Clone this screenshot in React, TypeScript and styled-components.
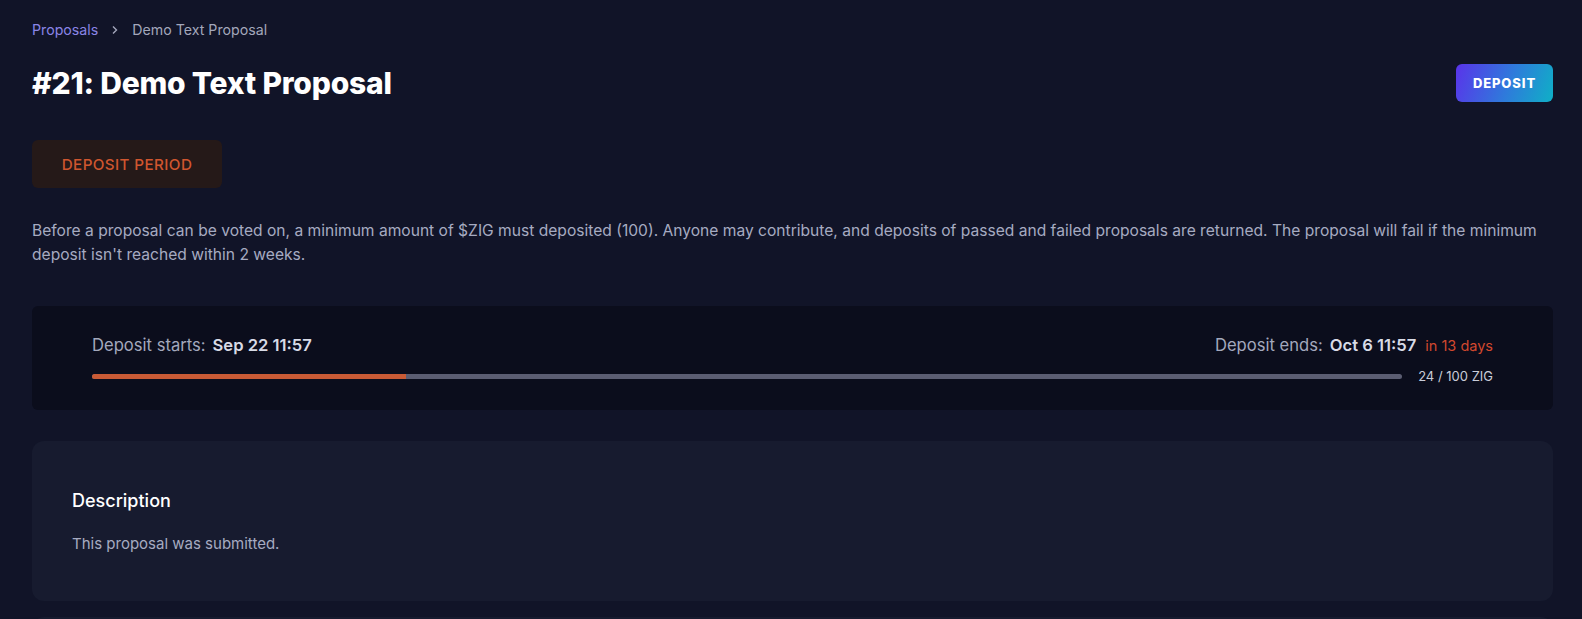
import React from "react";
import styled, { createGlobalStyle } from "styled-components";

const GlobalStyle = createGlobalStyle`
  html, body {
    margin: 0;
    padding: 0;
    background: #111428;
  }
  body {
    font-family: Inter, "Noto Sans", "Liberation Sans", sans-serif;
    -webkit-font-smoothing: antialiased;
  }
  * { box-sizing: border-box; }
`;

const Page = styled.main`
  min-height: 619px;
  background: #111428;
  padding: 20px 29px 0 32px;
  display: flex;
  flex-direction: column;
`;

const Breadcrumbs = styled.nav`
  display: flex;
  align-items: center;
  gap: 13px;
  font-size: 14.2px;
  line-height: 20px;
  height: 20px;
`;

const CrumbLink = styled.a`
  color: #8a85e6;
  text-decoration: none;
`;

const CrumbSep = styled.span`
  color: #a3a7bb;
  display: inline-flex;
  align-items: center;
`;

const CrumbCurrent = styled.span`
  color: #a3a7bb;
`;

const HeaderRow = styled.div`
  display: flex;
  align-items: center;
  justify-content: space-between;
  margin-top: 24px;
  height: 38px;
`;

const Title = styled.h1`
  margin: 0;
  color: #ffffff;
  font-size: 30px;
  font-weight: 800;
  letter-spacing: -0.2px;
`;

const GradientButton = styled.button`
  height: 38px;
  width: 97px;
  border: 0;
  border-radius: 6px;
  background: linear-gradient(110deg, #5a33ea 0%, #2e7bdb 55%, #0fb0c6 100%);
  color: #ffffff;
  font-family: inherit;
  font-size: 13px;
  font-weight: 800;
  letter-spacing: 0.9px;
  cursor: pointer;
`;

const StatusBadge = styled.div`
  margin-top: 38px;
  width: 190px;
  height: 48px;
  border-radius: 6px;
  background: #251918;
  color: #d0562f;
  font-size: 15.2px;
  font-weight: 500;
  letter-spacing: 0.4px;
  display: flex;
  align-items: center;
  justify-content: center;
`;

const Intro = styled.p`
  margin: 31px 0 0;
  color: #a6abc1;
  font-size: 15.6px;
  line-height: 24px;
`;

const TimelineCard = styled.section`
  margin-top: 39px;
  background: #0b0d1c;
  border-radius: 6px;
  padding: 29px 60px 26px;
  display: flex;
  flex-direction: column;
  gap: 13px;
`;

const TimelineLabels = styled.div`
  display: flex;
  justify-content: space-between;
  align-items: baseline;
`;

const DateGroup = styled.div`
  display: flex;
  align-items: baseline;
  gap: 7px;
  font-size: 16.6px;
`;

const DateLabel = styled.span`
  color: #a3a8bd;
`;

const DateValue = styled.span`
  color: #d8dbe6;
  font-weight: 600;
`;

const Remaining = styled.span`
  color: #d2482e;
  font-size: 14.5px;
  margin-left: 2px;
`;

const ProgressRow = styled.div`
  display: flex;
  align-items: center;
  gap: 16px;
`;

const Track = styled.div`
  flex: 1;
  height: 5px;
  border-radius: 3px;
  background: #5b5d72;
  overflow: hidden;
`;

const Fill = styled.div`
  height: 100%;
  background: #c95a35;
`;

const Amount = styled.span`
  color: #c9ccd8;
  font-size: 13px;
`;

const DescriptionCard = styled.section`
  margin-top: 31px;
  background: #171b2f;
  border-radius: 12px;
  padding: 49px 40px 46px;
  display: flex;
  flex-direction: column;
  gap: 22px;
`;

const CardTitle = styled.h2`
  margin: 0;
  color: #ffffff;
  font-size: 18px;
  font-weight: 500;
`;

const CardText = styled.p`
  margin: 0;
  color: #a6abc1;
  font-size: 15px;
  line-height: 22px;
`;

const NextCard = styled.section`
  margin-top: 16px;
  background: #171b2f;
  border-radius: 12px;
  height: 60px;
`;

export default function App() {
  const deposited = 24;
  const required = 100;
  return (
    <>
      <GlobalStyle />
      <Page>
        <Breadcrumbs>
          <CrumbLink href="#">Proposals</CrumbLink>
          <CrumbSep>
            <svg width="8" height="10" viewBox="0 0 8 10" fill="none">
              <path d="M2 1.5L5.5 5L2 8.5" stroke="currentColor" strokeWidth="1.4" />
            </svg>
          </CrumbSep>
          <CrumbCurrent>Demo Text Proposal</CrumbCurrent>
        </Breadcrumbs>
        <HeaderRow>
          <Title>#21: Demo Text Proposal</Title>
          <GradientButton>DEPOSIT</GradientButton>
        </HeaderRow>
        <StatusBadge>DEPOSIT PERIOD</StatusBadge>
        <Intro>
          Before a proposal can be voted on, a minimum amount of $ZIG must deposited (100). Anyone may contribute, and
          deposits of passed and failed proposals are returned. The proposal will fail if the minimum deposit isn't
          reached within 2 weeks.
        </Intro>
        <TimelineCard>
          <TimelineLabels>
            <DateGroup>
              <DateLabel>Deposit starts:</DateLabel>
              <DateValue>Sep 22 11:57</DateValue>
            </DateGroup>
            <DateGroup>
              <DateLabel>Deposit ends:</DateLabel>
              <DateValue>Oct 6 11:57</DateValue>
              <Remaining>in 13 days</Remaining>
            </DateGroup>
          </TimelineLabels>
          <ProgressRow>
            <Track>
              <Fill style={{ width: `${(deposited / required) * 100}%` }} />
            </Track>
            <Amount>
              {deposited} / {required} ZIG
            </Amount>
          </ProgressRow>
        </TimelineCard>
        <DescriptionCard>
          <CardTitle>Description</CardTitle>
          <CardText>This proposal was submitted.</CardText>
        </DescriptionCard>
        <NextCard />
      </Page>
    </>
  );
}
